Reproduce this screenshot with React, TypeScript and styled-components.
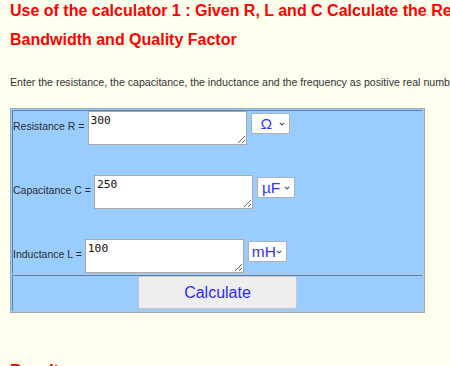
import React from 'react';
import styled, { createGlobalStyle } from 'styled-components';

const GlobalStyle = createGlobalStyle`
  html, body {
    margin: 0;
    padding: 0;
    overflow: hidden;
    background: #ffffee;
  }
  body {
    font-family: 'Liberation Sans', Arial, sans-serif;
  }
`;

const Page = styled.div`
  width: 620px;
  padding: 0 10px;
`;

const Title = styled.h1`
  margin: -4px 0 0;
  font-size: 16px;
  line-height: 29px;
  font-weight: bold;
  color: #ff0000;
`;

const Intro = styled.p`
  margin: 21px 0 0;
  font-size: 10.6px;
  line-height: 14px;
  color: #333333;
  white-space: nowrap;
`;

const Table = styled.div`
  margin-top: 19px;
  width: 415px;
  box-sizing: border-box;
  border: 1px solid #9aa9b8;
  padding: 1px;
  background: #99ccff;
  display: flex;
  flex-direction: column;
  gap: 1px;
`;

const Cell = styled.div`
  border: 1px solid;
  border-color: #5f80a8 #b4c6da #b4c6da #5f80a8;
`;

const Inputs = styled(Cell)`
  display: flex;
  flex-direction: column;
  gap: 30px;
`;

const Row = styled.div`
  display: flex;
  align-items: flex-start;
`;

const Label = styled.label`
  margin-top: 9px;
  margin-right: 3px;
  font-size: 10.5px;
  color: #2e2e2e;
  white-space: nowrap;
`;

const Field = styled.textarea`
  width: 159px;
  height: 34px;
  box-sizing: border-box;
  margin: 0;
  padding: 2px;
  border: 1px solid #aaaaaa;
  font-family: 'DejaVu Sans Mono', monospace;
  font-size: 11.3px;
  line-height: 13px;
  color: #111111;
  background: #ffffff;
`;

const UnitBox = styled.div<{ $w: number; $pad: number }>`
  width: ${(p) => p.$w}px;
  height: 21px;
  box-sizing: border-box;
  margin: 2px 0 0 4px;
  padding: 0 4px 0 ${(p) => p.$pad}px;
  display: flex;
  align-items: center;
  border: 1px solid #b0b0b0;
  border-radius: 2px;
  background: #ffffff;
`;

const Unit = styled.select`
  appearance: none;
  flex: 1;
  min-width: 0;
  margin: 0;
  padding: 0;
  border: none;
  outline: none;
  background: transparent;
  color: #3333ff;
  font-family: 'Liberation Sans', Arial, sans-serif;
  font-size: 15.5px;
  line-height: 19px;
`;

const Chevron = styled.svg`
  flex: none;
  width: 6px;
  height: 4px;
`;

const ButtonCell = styled(Cell)`
  display: flex;
  justify-content: center;
  padding: 0 0 1px;
`;

const CalcButton = styled.button`
  width: 159px;
  height: 33px;
  border: 1px solid #c8c8c8;
  border-radius: 2px;
  background: #eeeeee;
  color: #2a2aff;
  font-family: 'Liberation Sans', Arial, sans-serif;
  font-size: 16px;
`;

const Results = styled(Title)`
  margin-top: 43px;
`;

const inputs = [
  { label: 'Resistance R =', value: '300', unit: 'Ω', w: 39, pad: 9 },
  { label: 'Capacitance C =', value: '250', unit: 'µF', w: 38, pad: 4 },
  { label: 'Inductance L =', value: '100', unit: 'mH', w: 39, pad: 3 },
];

export default function App() {
  return (
    <Page>
      <GlobalStyle />
      <Title>
        Use of the calculator 1 : Given R, L and C Calculate the Resonant Frequency, Bandwidth and Quality Factor
      </Title>
      <Intro>
        Enter the resistance, the capacitance, the inductance and the frequency as positive real numbers with the
        appropriate units.
      </Intro>
      <Table>
        <Inputs>
          {inputs.map((i) => (
            <Row key={i.label}>
              <Label>{i.label}</Label>
              <Field defaultValue={i.value} />
              <UnitBox $w={i.w} $pad={i.pad}>
                <Unit defaultValue={i.unit}>
                  <option>{i.unit}</option>
                </Unit>
                <Chevron viewBox="0 0 6 4">
                  <path d="M0.8 0.8 L3 3 L5.2 0.8" fill="none" stroke="#4a5a8a" strokeWidth="1.2" />
                </Chevron>
              </UnitBox>
            </Row>
          ))}
        </Inputs>
        <ButtonCell>
          <CalcButton>Calculate</CalcButton>
        </ButtonCell>
      </Table>
      <Results>Results</Results>
    </Page>
  );
}
